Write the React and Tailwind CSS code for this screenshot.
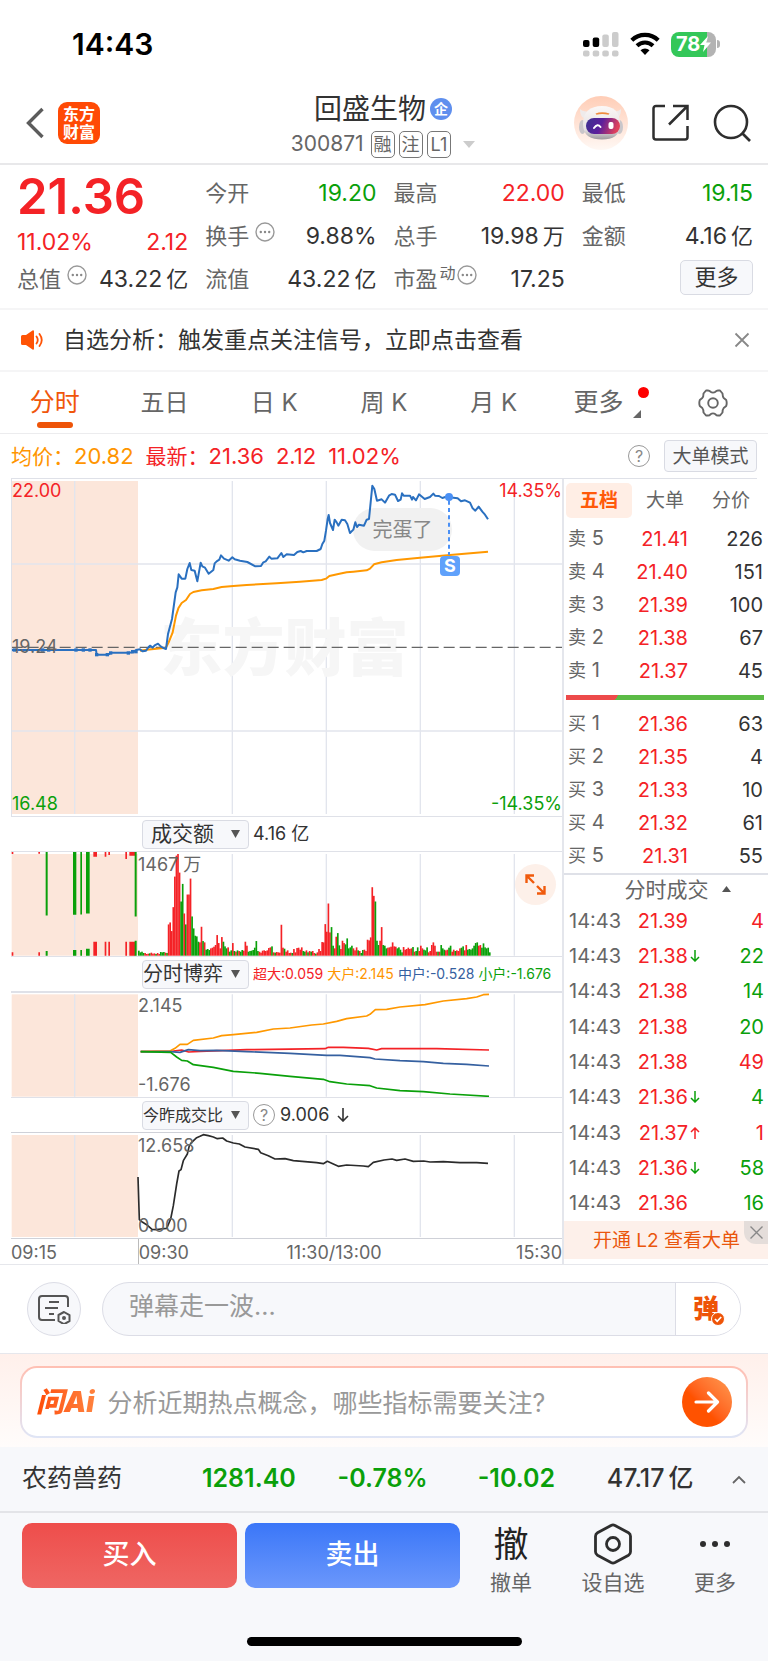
import React from "react";

const FONT = "font-['Inter','Noto_Sans_CJK_SC',sans-serif]";

const RED = "#f42226";
const GREEN = "#0aa00a";
const GRID = "#e2e5ed";
const VERTICALS = [697, 979, 1261, 1543];

const PRICE =
  "36,543 228,543 270,543 288,543 290,557 325,557 332,551 385,551 400,550 408,543 420,541 428,547 438,545 446,534 450,530 458,536 464,529 474,524 482,532 490,537 498,540 504,495 516,450 527,370 532,355 536,316 545,329 556,329 562,300 569,282 574,303 584,305 592,337 602,281 607,292 615,296 626,314 640,303 644,283 650,277 658,272 663,259 672,269 686,275 697,265 704,271 720,275 742,279 766,292 783,291 790,280 797,277 808,263 814,269 832,268 844,252 850,264 860,256 882,258 892,249 902,246 910,250 920,246 950,246 962,240 967,225 973,215 978,185 983,150 986,138 990,162 999,183 1004,152 1010,160 1015,170 1025,152 1035,154 1042,165 1050,192 1060,182 1066,160 1071,174 1077,167 1092,170 1100,152 1107,150 1117,50 1123,60 1131,95 1145,91 1155,101 1167,80 1175,75 1185,77 1194,96 1202,92 1206,73 1211,80 1230,80 1236,92 1239,84 1248,94 1257,76 1274,90 1290,84 1300,74 1305,80 1317,81 1327,87 1336,84 1347,84 1360,86 1373,88 1383,97 1395,94 1410,101 1418,118 1426,125 1436,113 1447,128 1455,137 1464,151";
const AVERAGE =
  "420,545 440,542 498,536 506,520 518,490 528,440 535,418 545,402 558,393 570,375 580,369 605,364 640,360 665,354 700,351 740,348 830,343 900,338 965,333 978,329 988,321 1005,317 1015,315 1040,310 1060,308 1100,304 1110,299 1122,286 1145,280 1190,273 1260,266 1350,258 1464,248";

const VOLUME = [
  -15, -10, -12, -8, 8, 5, 6, -7, 9, 6, 7, -5, 8, 5, -11, -10, -11, 9, -8, 94, 100, 74, 146, 238, 301, 306, 250, -163, -216, 127,
  -94, 184, 184, 232, -118, -82, -60, -58, -42, 40, 87, -44, 40, -18, -20, -17, 22, 24, 27, 32, 62, 38, 22, 56, -42, -28, -22, 25,
  -12, -16, 38, -14, 12, -16, 14, -12, -17, 15, 42, 30, -12, -14, -15, -17, -24, -44, -14, 12, 9, 15, 16, 14, 16, 23, 25, -28, 10,
  -9, 11, 10, 9, 93, 24, -21, 12, 16, 8, 9, -8, 20, 10, 23, 24, 18, 25, -14, -12, 16, -10, 14, -12, 14, 8, -6, 10, 20, 14, 41, 40,
  95, 72, 157, 70, -86, -30, 22, 57, -68, -31, 20, 45, 38, -34, -52, -22, -25, -30, 22, 16, 25, -16, 14, -8, -17, 18, 14, 48, 46,
  55, 206, 180, -163, -45, -32, 45, 86, -32, -30, -22, 24, 25, 27, 40, 28, 27, -22, -25, -18, -10, 26, 18, 20, 24, 20, 22, -26,
  12, -14, -25, 14, 30, 22, -18, -16, -25, 10, 14, 32, 40, 30, 12, -12, 12, -32, -22, -18, 16, 18, -24, -30, 12, 18, -14, 16, 14,
  22, -24, -28, 16, 32, -18, -20, -18, -22, -30, -38, -40, 30, 32, -24, -37, -25, -22, -24, -10,
];

// x, width, bottom of the upper bar, top of the lower bar, colour
const AUCTION = [
  [35, 5, 135, 431, RED],
  [115, 5, 134, 431, RED],
  [137, 6, 320, 427, GREEN],
  [219, 10, 318, 424, GREEN],
  [241, 5, 317, 424, GREEN],
  [258, 11, 314, 420, GREEN],
  [280, 11, 143, 399, RED],
  [314, 5, 143, 399, RED],
  [325, 5, 138, 399, RED],
  [376, 5, 150, 399, RED],
  [388, 17, 140, 399, RED],
  [404, 6, 323, 396, GREEN],
];

const SUPER = "422,728 520,726 545,723 566,729 600,727 740,722 975,719 985,715 1030,715 1105,718 1130,723 1145,719 1310,719 1467,723";
const LARGE =
  "422,728 510,726 525,718 540,706 562,706 580,694 640,687 665,680 700,677 770,670 820,660 870,657 935,648 970,645 1010,637 1040,629 1100,621 1110,616 1126,602 1160,601 1200,594 1275,587 1330,576 1400,569 1430,564 1450,557 1467,556";
const MEDIUM =
  "422,728 510,728 540,730 565,722 600,725 650,724 740,728 870,733 980,739 1020,739 1110,746 1125,750 1200,755 1270,758 1330,763 1400,766 1467,771";
const SMALL =
  "422,728 512,730 530,744 545,754 562,756 580,767 640,775 700,787 780,793 870,802 970,811 990,818 1040,825 1110,830 1130,837 1200,845 1270,848 1350,855 1467,862";
const RATIO =
  "414,234 418,362 428,370 440,377 456,391 470,392 482,390 500,388 512,360 520,320 530,255 537,216 543,212 550,185 562,165 568,140 575,130 590,116 600,112 610,107 625,110 640,114 652,119 668,117 680,126 700,132 718,135 735,144 775,151 782,161 805,170 825,180 855,179 880,185 950,191 970,194 982,187 1000,195 1015,202 1040,198 1090,201 1105,203 1120,190 1152,183 1176,180 1190,184 1215,180 1240,187 1271,186 1290,189 1330,188 1380,191 1430,191 1464,193";

const SELLS = [
  ["卖 5", "21.41", "226"],
  ["卖 4", "21.40", "151"],
  ["卖 3", "21.39", "100"],
  ["卖 2", "21.38", "67"],
  ["卖 1", "21.37", "45"],
];
const BUYS = [
  ["买 1", "21.36", "63"],
  ["买 2", "21.35", "4"],
  ["买 3", "21.33", "10"],
  ["买 4", "21.32", "61"],
  ["买 5", "21.31", "55"],
];
const TICKS = [
  ["21.39", "", "4", true],
  ["21.38", "↓", "22", false],
  ["21.38", "", "14", false],
  ["21.38", "", "20", false],
  ["21.38", "", "49", true],
  ["21.36", "↓", "4", false],
  ["21.37", "↑", "1", true],
  ["21.36", "↓", "58", false],
  ["21.36", "", "16", false],
];

function StatusBar() {
  return (
    <div className="flex h-[82px] items-center justify-between pr-[48px] pl-[72px] text-black">
      <span className="pt-[6px] text-[30px] font-semibold">14:43</span>
      <div className="flex items-center gap-[11px] pt-[6px]">
        <svg width="36" height="26" viewBox="0 0 36 26" aria-hidden="true">
          <rect x="0" y="9" width="6.5" height="7" rx="2" fill="#000" />
          <rect x="9.7" y="6.500" width="6.500" height="9.500" rx="2" fill="#000" />
          <rect x="19.300" y="3.500" width="6.500" height="12.500" rx="2" fill="#ccc" />
          <rect x="29" y="1" width="6.500" height="15" rx="2" fill="#ccc" />
          {[0, 9.7, 19.3, 29].map((x) => (
            <rect key={x} x={x} y="19.500" width="6.500" height="6" rx="2" fill="#ccc" />
          ))}
        </svg>
        <svg width="30" height="24" viewBox="0 0 30 24" aria-hidden="true">
          <path d="M1.800 8.200a19 19 0 0 1 26.400 0" fill="none" stroke="#000" strokeWidth="4.200" />
          <path d="M7 13.800a11.500 11.500 0 0 1 16 0" fill="none" stroke="#000" strokeWidth="4" />
          <path d="M10.500 18.200a6.500 6.500 0 0 1 9 0L15 23z" fill="#000" />
        </svg>
        <div className="flex items-center gap-px">
          <div className="flex h-[25px] w-[45px] items-center rounded-[8px] bg-[linear-gradient(90deg,#34c759_79%,#b3b3b3_79%)] pl-[5px] text-white">
            <span className="text-xl leading-6 font-bold">78</span>
            <svg width="11" height="16" viewBox="0 0 11 16" aria-hidden="true">
              <path d="M8 0 0 9h4.500L3 16l8-9.500H6.500z" fill="#fff" />
            </svg>
          </div>
          <span className="h-2 w-[3px] rounded-r-full bg-[#b3b3b3]" />
        </div>
      </div>
    </div>
  );
}

function Robot() {
  return (
    <svg width="54" height="54" viewBox="0 0 54 54" aria-hidden="true">
      <defs>
        <linearGradient id="halo" x1="0" y1="0" x2="0" y2="1">
          <stop offset="0" stopColor="#ffcdb6" />
          <stop offset="1" stopColor="#fff8f4" />
        </linearGradient>
        <linearGradient id="visor" x1="0" y1="0" x2="1" y2="0.200">
          <stop offset="0" stopColor="#3b3190" />
          <stop offset="0.500" stopColor="#5b1f9c" />
          <stop offset="1" stopColor="#e0405c" />
        </linearGradient>
        <linearGradient id="helmet" x1="0" y1="0" x2="0" y2="1">
          <stop offset="0" stopColor="#fbf8f7" />
          <stop offset="0.700" stopColor="#e6e2e3" />
          <stop offset="1" stopColor="#9d9a9e" />
        </linearGradient>
      </defs>
      <circle cx="27" cy="27" r="27" fill="url(#halo)" />
      <path d="M6 13c0 6 2 9 6 10l5-8c-6 1-9 0-11-2zM47 13c0 6-2 9-6 10l-4-8c5 1 8 0 10-2z" fill="#efebeb" />
      <ellipse cx="8.500" cy="31" rx="3.500" ry="7" fill="#c9c6ca" />
      <ellipse cx="45.500" cy="31" rx="3.500" ry="7" fill="#c9c6ca" />
      <path d="M9 28C9 16 16 10 28 10s18 6 18 18-7 15.500-18 15.500S9 40 9 28z" fill="url(#helmet)" />
      <path d="M21.500 17.500q6.500-2.500 14 0l-1 1.200q-6.500-1.200-12 0z" fill="#ef8b3e" />
      <rect x="12" y="22" width="34" height="16" rx="8" fill="url(#visor)" />
      <path d="M20 32q3.500-5 6.500-1" fill="none" stroke="#fff" strokeWidth="2" strokeLinecap="round" />
      <rect x="34.500" y="26" width="5" height="7" rx="2" fill="#fff" />
    </svg>
  );
}

function Header() {
  return (
    <header className="grid h-[83px] grid-cols-[1fr_auto_1fr] items-center border-b-2 border-[#e8e8ea] pr-[17px] pl-[15px]">
      <div className="flex items-center gap-[13px] pl-[10px]">
        <button type="button" aria-label="返回">
          <svg width="20" height="32" viewBox="0 0 20 32" className="block" aria-hidden="true">
            <path d="M17.500 2 3.500 16l14 14" fill="none" stroke="#5c5c5c" strokeWidth="3.400" />
          </svg>
        </button>
        <a href="#home" className="grid size-[42px] place-content-center rounded-[9px] bg-[#ff4a05] text-center text-base leading-[18px] font-bold text-white">
          <span>东方</span>
          <span>财富</span>
        </a>
      </div>
      <div className="flex flex-col items-center gap-[3px] pt-1">
        <h1 className="flex items-center gap-1 text-[28px] leading-9 text-[#333]">
          回盛生物
          <span className="grid size-[22px] place-content-center rounded-full bg-[#5f8fee] text-sm leading-none font-bold text-white">企</span>
        </h1>
        <div className="flex items-center gap-1 text-[21px] leading-7 text-[#666]">
          <span className="mr-[3px]">300871</span>
          <span className="rounded-[5px] border border-[#777] px-[2px] text-lg leading-[25px]">融</span>
          <span className="rounded-[5px] border border-[#777] px-[2px] text-lg leading-[25px]">注</span>
          <span className="rounded-[5px] border border-[#777] px-[3px] text-lg leading-[25px]">L1</span>
          <svg width="12" height="7" viewBox="0 0 12 7" className="ml-2" aria-hidden="true">
            <path d="M0 0h12L6 7z" fill="#ccc" />
          </svg>
        </div>
      </div>
      <div className="flex items-center justify-end gap-6">
        <button type="button" aria-label="智能助手">
          <Robot />
        </button>
        <button type="button" aria-label="分享">
          <svg width="37" height="37" viewBox="0 0 37 37" fill="none" stroke="#2e2e2e" strokeWidth="2.500" aria-hidden="true">
            <path d="M13 2H4a2.500 2.500 0 0 0-2.500 2.500V33A2.500 2.500 0 0 0 4 35.500h29a2.500 2.500 0 0 0 2.500-2.500V22M21 2h14.500v14M35 2.500 17 20.500" />
          </svg>
        </button>
        <button type="button" aria-label="搜索">
          <svg width="38" height="38" viewBox="0 0 38 38" fill="none" stroke="#2e2e2e" strokeWidth="2.600" aria-hidden="true">
            <circle cx="18" cy="18" r="16" />
            <path d="M29 29l8 8" />
          </svg>
        </button>
      </div>
    </header>
  );
}

function Dots({ tight }) {
  return (
    <svg width="20" height="20" viewBox="0 0 20 20" className={`mb-2 inline-block shrink-0 ${tight ? "ml-px" : "ml-[6px]"}`} aria-hidden="true">
      <circle cx="10" cy="10" r="9" fill="none" stroke="#999" strokeWidth="1.400" />
      <circle cx="5.800" cy="10" r="1.200" fill="#888" />
      <circle cx="10" cy="10" r="1.200" fill="#888" />
      <circle cx="14.200" cy="10" r="1.200" fill="#888" />
    </svg>
  );
}

function Stat({ label, info, sup, value, unit, tone = "text-[#333]" }) {
  return (
    <div className="flex h-[43px] items-center justify-between">
      <dt className="flex items-center text-[#666]">
        {label}
        {sup && <sup className="top-0 mb-3 ml-[2px] text-base">{sup}</sup>}
        {info && <Dots tight={Boolean(sup)} />}
      </dt>
      <dd className={`text-[23px] ${tone}`}>
        {value}
        {unit && <span className="ml-1 text-[22px]">{unit}</span>}
      </dd>
    </div>
  );
}

function Quote() {
  return (
    <section className="grid h-[145px] grid-cols-4 gap-x-[17px] border-b-2 border-[#f5f5f6] pt-[6px] pr-[15px] pl-[17px] text-[22px] leading-7">
      <div>
        <div className="h-[56px] text-[49px] leading-[52px] font-semibold text-[#f42226]">21.36</div>
        <div className="flex h-[30px] items-center justify-between text-[23px] text-[#f42226]">
          <span>11.02%</span>
          <span>2.12</span>
        </div>
        <dl>
          <Stat label="总值" info value="43.22" unit="亿" />
        </dl>
      </div>
      <dl>
        <Stat label="今开" value="19.20" tone="text-[#0aa00a]" />
        <Stat label="换手" info value="9.88%" />
        <Stat label="流值" value="43.22" unit="亿" />
      </dl>
      <dl>
        <Stat label="最高" value="22.00" tone="text-[#f42226]" />
        <Stat label="总手" value="19.98" unit="万" />
        <Stat label="市盈" sup="动" info value="17.25" />
      </dl>
      <div>
        <dl>
          <Stat label="最低" value="19.15" tone="text-[#0aa00a]" />
          <Stat label="金额" value="4.16" unit="亿" />
        </dl>
        <div className="flex h-[40px] items-center justify-end">
          <button type="button" className="h-[35px] w-[73px] rounded-[5px] border border-[#d9dbe3] bg-[#f7f8fb] text-[#333]">
            更多
          </button>
        </div>
      </div>
    </section>
  );
}

function Notice() {
  return (
    <div className="flex h-[62px] items-center border-b-2 border-[#f5f5f6] pr-[18px] pl-5 text-[#333]">
      <svg width="24" height="20" viewBox="0 0 24 20" aria-hidden="true">
        <path d="M1 6.500Q1 5 2.500 5H6l6.500-4.600Q14 0 14 1.500v17q0 1.500-1.500 1.100L6 15H2.500Q1 15 1 13.500z" fill="#ff5305" />
        <path d="M16.500 6.500q2.500 3.500 0 7M19.500 4q4.500 6 0 12" fill="none" stroke="#ff5305" strokeWidth="1.800" strokeLinecap="round" />
      </svg>
      <a href="#signal" className="ml-[19px] flex-1 text-[23px]">
        自选分析：触发重点关注信号，立即点击查看
      </a>
      <button type="button" aria-label="关闭">
        <svg width="16" height="16" viewBox="0 0 16 16" aria-hidden="true">
          <path d="M1.500 1.500l13 13M14.500 1.500l-13 13" stroke="#888" strokeWidth="1.800" />
        </svg>
      </button>
    </div>
  );
}

function PeriodTabs() {
  return (
    <nav className="grid h-[62px] grid-cols-7 border-b border-[#ececee] text-2xl text-[#666]">
      <button type="button" className="relative text-[25px] text-[#f0560a]">
        分时
        <span className="absolute bottom-[5px] left-1/2 h-[6px] w-9 -translate-x-1/2 rounded-full bg-[#ee5408]" />
      </button>
      <button type="button">五日</button>
      <button type="button">日 K</button>
      <button type="button">周 K</button>
      <button type="button">月 K</button>
      <button type="button" className="flex items-center justify-center gap-[10px] pl-2 text-[25px]">
        更多
        <span className="flex flex-col items-end gap-3">
          <span className="-mr-2 size-[11px] rounded-full bg-[#fe0000]" />
          <svg width="8" height="8" viewBox="0 0 8 8" aria-hidden="true">
            <path d="M8 0v8H0z" fill="#666" />
          </svg>
        </span>
      </button>
      <button type="button" aria-label="设置" className="grid place-content-center">
        <svg width="30" height="28" viewBox="0 0 30 28" fill="none" stroke="#666" strokeWidth="1.900" strokeLinejoin="round" aria-hidden="true">
          <path d="M8 1.500h2q1.500 0 2.500 1.200 2.500 1.800 5 0Q18.500 1.500 20 1.500h2l2.500 3q.2 3.500 1.200 4.500l2.500 2q1 3 0 6l-2.500 2q-1.200 1.500-1.200 4.500l-2.500 3h-2q-1.500 0-2.500-1.200-2.500-1.800-5 0-1 1.200-2.500 1.200H8l-2.500-3q0-3-1.200-4.500L1.800 17q-1-3 0-6l2.500-2Q5.500 8 5.500 4.500z" />
          <circle cx="15" cy="14" r="4.800" />
        </svg>
      </button>
    </nav>
  );
}

function Help() {
  return (
    <button type="button" aria-label="说明" className="grid size-[22px] shrink-0 place-content-center rounded-full border-[1.5px] border-[#999] text-base leading-none text-[#888]">
      ?
    </button>
  );
}

function PriceLegend() {
  return (
    <div className="mr-[11px] ml-[11px] flex h-[45px] items-center border-b border-[#dfe1e8] text-[22px]">
      <span className="text-[#ff9500]">
        <span className="text-[21px]">均价：</span>20.82
      </span>
      <span className="ml-3 text-[#f42226]">
        <span className="text-[21px]">最新：</span>21.36
      </span>
      <span className="ml-3 text-[#f42226]">2.12</span>
      <span className="mr-auto ml-3 text-[#f42226]">11.02%</span>
      <Help />
      <button type="button" className="ml-[14px] h-8 w-[93px] rounded-[4px] border border-[#d9dbe3] bg-[#f7f8fb] text-[19px] leading-none text-[#555]">
        大单模式
      </button>
    </div>
  );
}

function Grid({ top, bottom }) {
  return (
    <>
      <rect x="35" y={top} width="379" height={bottom - top} fill="#fce6da" />
      <path d={`M224 ${top}V${bottom}`} stroke={GRID} strokeWidth="4" />
      {VERTICALS.map((x) => (
        <path key={x} d={`M${x} ${top}V${bottom}`} stroke={GRID} strokeWidth="4" />
      ))}
    </>
  );
}

function Line({ points, color, width = 5 }) {
  return <polyline points={points} fill="none" stroke={color} strokeWidth={width} strokeLinejoin="round" />;
}

function PriceChart() {
  return (
    <div className="relative h-[338px] border-b border-l border-[#dfe1e8] text-lg leading-5">
      <svg viewBox="36 30 1650 1011" preserveAspectRatio="none" className="absolute inset-0 size-full" aria-hidden="true">
        <Grid top={36} bottom={1035} />
        <path d="M35 285H1686M35 786H1686" stroke={GRID} strokeWidth="5" />
      </svg>
      <span className="absolute top-[132px] left-[27%] text-[62px] leading-[76px] font-black text-[#f6f6f6]">东方财富</span>
      <span className="absolute top-[29px] left-[62%] flex h-[43px] w-[99px] items-center justify-center rounded-full bg-[#f1f1f1] text-xl text-[#888]">完蛋了</span>
      <svg viewBox="36 30 1650 1011" preserveAspectRatio="none" className="absolute inset-0 size-full" role="img" aria-label="分时走势">
        <path d="M35 535H1686" stroke="#666" strokeWidth="4" strokeDasharray="33 15" />
        <Line points={AVERAGE} color="#ff9800" width={6} />
        <Line points={PRICE} color="#2a70c0" width={6} />
        {[43, 128, 146, 228, 250, 270, 290, 322, 332, 385, 398, 408].map((x) => (
          <rect key={x} x={x - 5} y={x < 280 ? 538 : x < 330 ? 552 : x < 390 ? 547 : 543} width="10" height="10" fill="#2a70c0" />
        ))}
        <path d="M1347 95V258" stroke="#4a90f5" strokeWidth="6" strokeDasharray="12 10" />
        <circle cx="1347" cy="84" r="12" fill="#4a90f5" />
      </svg>
      <span className="absolute top-[77px] left-[78%] grid size-5 -translate-x-px place-content-center rounded-[4px] bg-[#5fa1fb] text-lg leading-none font-bold text-white">S</span>
      <span className="absolute top-[2px] left-0 text-[#f42226]">22.00</span>
      <span className="absolute top-[2px] right-0 text-[#f42226]">14.35%</span>
      <span className="absolute top-[158px] left-0 text-[#666]">19.24</span>
      <span className="absolute bottom-[2px] left-0 text-[#0aa00a]">16.48</span>
      <span className="absolute right-0 bottom-[2px] text-[#0aa00a]">-14.35%</span>
    </div>
  );
}

function Picker({ label, name, size }) {
  return (
    <div className="relative ml-[131px] shrink-0">
      <select aria-label={name} className={`block h-[29px] w-[107px] appearance-none rounded-[4px] border border-[#d9dbe3] bg-[#f7f8fb] leading-[26px] text-[#333] ${size}`}>
        <option>{label}</option>
      </select>
      <svg width="9" height="8" viewBox="0 0 9 8" className="pointer-events-none absolute top-[10px] right-[9px]" aria-hidden="true">
        <path d="M0 0h9L4.500 8z" fill="#555" />
      </svg>
    </div>
  );
}

function VolumeChart() {
  return (
    <div className="relative h-[106px] border-y border-[#dfe1e8] text-lg leading-5">
      <svg viewBox="33 129 1653 313" preserveAspectRatio="none" className="absolute inset-0 size-full" role="img" aria-label="成交额">
        <Grid top={135} bottom={441} />
        {AUCTION.map(([x, w, upper, lower, color]) => (
          <path key={x} d={`M${x} 129h${w}V${upper}h-${w}zM${x} ${lower}h${w}V441h-${w}z`} fill={color} />
        ))}
        {VOLUME.map((v, i) => (
          <rect key={i} x={414 + i * 4.7} y={441 - Math.abs(v)} width="5" height={Math.abs(v)} fill={v > 0 ? RED : GREEN} />
        ))}
      </svg>
      <span className="absolute top-[3px] left-[127px] text-[#666]">1467 万</span>
      <button type="button" aria-label="全屏" className="absolute top-[12px] right-[6px] grid size-[41px] place-content-center rounded-full bg-[#fdf0e9]">
        <svg width="21" height="21" viewBox="0 0 21 21" fill="none" stroke="#f05a0c" strokeWidth="2.400" aria-hidden="true">
          <path d="M9 1.500H1.500V9M1.500 1.500l7.500 7.500M12 19.500h7.500V12M19.500 19.500 12 12" />
        </svg>
      </button>
    </div>
  );
}

function Charts() {
  return (
    <div className="flex min-w-0 flex-1 flex-col pl-[11px]">
      <PriceChart />
      <div className="flex h-[34px] items-center">
        <Picker name="指标一" label="成交额" size="pl-2 text-[21px]" />
        <span className="ml-1 text-lg text-[#333]">4.16 亿</span>
      </div>
      <VolumeChart />
      <div className="flex h-[34px] items-center">
        <Picker name="指标二" label="分时博弈" size="text-xl" />
        <div className="ml-1 flex gap-1 text-sm whitespace-nowrap">
          <span className="text-[#f42226]">超大:0.059</span>
          <span className="text-[#ff9500]">大户:2.145</span>
          <span className="text-[#3560a0]">中户:-0.528</span>
          <span className="text-[#0aa00a]">小户:-1.676</span>
        </div>
      </div>
      <div className="relative h-[107px] border-t-2 border-b border-[#dfe1e8] text-lg leading-5 text-[#666]">
        <svg viewBox="33 552 1653 312" preserveAspectRatio="none" className="absolute inset-0 size-full" role="img" aria-label="分时博弈">
          <Grid top={556} bottom={863} />
          <Line points={SUPER} color="#f42226" />
          <Line points={LARGE} color="#ff9800" />
          <Line points={MEDIUM} color="#3560a0" />
          <Line points={SMALL} color="#0aa00a" />
        </svg>
        <span className="absolute top-[3px] left-[127px]">2.145</span>
        <span className="absolute bottom-[2px] left-[127px]">-1.676</span>
      </div>
      <div className="flex h-[34px] items-center">
        <Picker name="指标三" label="今昨成交比" size="text-base" />
        <span className="ml-1 flex">
          <Help />
        </span>
        <span className="ml-[5px] text-lg text-[#333]">9.006</span>
        <svg width="12" height="14" viewBox="0 0 12 14" className="ml-2" fill="none" stroke="#333" strokeWidth="1.600" aria-hidden="true">
          <path d="M6 0v12.500M1 8l5 5 5-5" />
        </svg>
      </div>
      <div className="relative h-[107px] border-y border-[#cfd1d8] text-lg leading-5 text-[#666]">
        <svg viewBox="33 102 1653 315" preserveAspectRatio="none" className="absolute inset-0 size-full" role="img" aria-label="今昨成交比">
          <Grid top={108} bottom={414} />
          <Line points={RATIO} color="#2b2b2b" />
        </svg>
        <span className="absolute top-[3px] left-[127px]">12.658</span>
        <span className="absolute bottom-[2px] left-[127px]">0.000</span>
      </div>
      <div className="flex h-[25px] items-stretch text-lg leading-[27px] text-[#666]">
        <span className="w-[23%]">09:15</span>
        <span className="w-[27%] border-l border-[#bbb]">09:30</span>
        <span>11:30/13:00</span>
        <span className="ml-auto">15:30</span>
      </div>
    </div>
  );
}

function Book({ rows, caption }) {
  return (
    <table className="h-[166px] w-full text-xl leading-6" aria-label={caption}>
      <tbody>
        {rows.map(([label, price, count]) => (
          <tr key={label}>
            <td className="w-[52px] pl-1 whitespace-nowrap text-[#666]">
              <span className="text-lg">{label.slice(0, 1)}</span>
              {" " + label.slice(2)}
            </td>
            <td className="w-[72px] text-right text-[#f42226]">{price}</td>
            <td className="pr-[5px] text-right text-[#333]">{count}</td>
          </tr>
        ))}
      </tbody>
    </table>
  );
}

function SidePanel() {
  return (
    <aside className="flex w-[206px] shrink-0 flex-col border-l-2 border-[#e4e6ec]">
      <div className="flex h-[43px] items-center text-[19px] leading-none text-[#666]">
        <button type="button" className="ml-[2px] h-[35px] w-[66px] rounded-[5px] bg-[#ffeee5] font-bold text-[#ff5a0a]">
          五档
        </button>
        <button type="button" className="flex-1">
          大单
        </button>
        <button type="button" className="mr-1 flex-1">
          分价
        </button>
      </div>
      <Book rows={SELLS} caption="卖盘" />
      <div className="flex h-[19px] items-center pr-1 pl-[2px]">
        <div className="h-[5px] w-full bg-[linear-gradient(125deg,#ed4a4a_26%,#5bbb46_26%)]" />
      </div>
      <Book rows={BUYS} caption="买盘" />
      <button type="button" className="flex h-[30px] items-center justify-center gap-[13px] border-t-2 border-[#dfe1e8] pl-[23px] text-[21px] leading-none text-[#666]">
        分时成交
        <svg width="9" height="6" viewBox="0 0 9 6" aria-hidden="true">
          <path d="M4.500 0 9 6H0z" fill="#555" />
        </svg>
      </button>
      <table className="h-[318px] w-full text-xl leading-6" aria-label="分时成交">
        <tbody>
          {TICKS.map(([price, arrow, count, up], i) => (
            <tr key={i}>
              <td className="w-[60px] pl-[5px] text-[#666]">14:43</td>
              <td className="w-[64px] text-right text-[#f42226]">{price}</td>
              <td className={up ? "text-[#f42226]" : "text-[#0aa00a]"}>
                {arrow && (
                  <svg width="10" height="12" viewBox="0 0 10 12" className="ml-[2px] block" fill="none" stroke="currentColor" strokeWidth="1.500" aria-label={arrow}>
                    <path d={arrow === "↓" ? "M5 0v11M1 7l4 4 4-4" : "M5 12V1M1 5l4-4 4 4"} />
                  </svg>
                )}
              </td>
              <td className={`pr-1 text-right ${up ? "text-[#f42226]" : "text-[#0aa00a]"}`}>{count}</td>
            </tr>
          ))}
        </tbody>
      </table>
      <div className="relative flex h-[38px] items-center bg-[#fdf0ea]">
        <a href="#level2" className="pl-[29px] text-[19px] leading-none text-[#ea560c]">
          开通 L2 查看大单
        </a>
        <button type="button" aria-label="关闭" className="absolute top-0 right-0 grid h-[23px] w-6 place-content-center rounded-bl-[12px] bg-[#e4ddda]">
          <svg width="13" height="13" viewBox="0 0 13 13" aria-hidden="true">
            <path d="M.5.5l12 12M12.500.5l-12 12" stroke="#888" strokeWidth="1.400" />
          </svg>
        </button>
      </div>
    </aside>
  );
}

function Barrage() {
  return (
    <div className="flex h-[90px] items-center gap-[21px] border-t border-b border-[#e6e7ec] pr-[27px] pl-[27px]">
      <button type="button" aria-label="弹幕设置" className="grid size-[54px] shrink-0 place-content-center rounded-full border border-[#dcdde6] bg-[#f7f8fb]">
        <svg width="34" height="30" viewBox="0 0 34 30" fill="none" stroke="#555" strokeWidth="2" aria-hidden="true">
          <path d="M31 13V5a3 3 0 0 0-3-3H5a3 3 0 0 0-3 3v18a3 3 0 0 0 3 3h13M12 8h10M8 14h13M12 20h5" />
          <path d="M27 18l5.500 3.200v6L27 30.200 21.500 27v-6z" strokeLinejoin="round" />
          <circle cx="27" cy="24" r="1" fill="#555" />
        </svg>
      </button>
      <div className="flex h-[54px] min-w-0 flex-1 overflow-hidden rounded-full border border-[#dcdde6] bg-[#f7f8fb]">
        <input aria-label="弹幕" placeholder="弹幕走一波..." className="min-w-0 flex-1 bg-transparent pb-1 pl-[26px] text-[25px] text-[#333] outline-none placeholder:text-[#999]" />
        <button type="button" aria-label="弹幕开关" className="relative w-[65px] border-l border-[#dcdde6] bg-white pr-1 text-[26px] leading-none font-black text-[#ee5408]">
          弹
          <svg width="14" height="14" viewBox="0 0 14 14" className="absolute top-[29px] left-[35px]" aria-hidden="true">
            <circle cx="7" cy="7" r="6.500" fill="#ee5408" stroke="#fff" />
            <path d="M4 7l2.200 2.300L10.200 5" fill="none" stroke="#fff" strokeWidth="1.700" />
          </svg>
        </button>
      </div>
    </div>
  );
}

function AskAi() {
  return (
    <div className="bg-linear-to-b from-[#fff0eb] to-[#fffcfb] px-5 pt-3 pb-[9px]">
      <div className="rounded-[17px] bg-linear-to-b from-[#ffbfb2] to-[#dfe5f6] p-[2px]">
        <div className="flex h-[68px] items-center rounded-[15px] bg-white pr-[14px] pl-[14px]">
          <span className="bg-linear-to-r from-[#ff4b00] to-[#ff8540] bg-clip-text pr-1 text-[28px] leading-9 font-black text-transparent italic">问Ai</span>
          <input aria-label="问Ai" placeholder="分析近期热点概念，哪些指标需要关注?" className="ml-[9px] min-w-0 flex-1 bg-transparent pt-1 text-[25px] text-[#333] outline-none placeholder:text-[#999]" />
          <button type="button" aria-label="发送" className="grid size-[50px] shrink-0 place-content-center rounded-full bg-linear-to-tr from-[#ff5200] from-40% to-[#ff9a50]">
            <svg width="26" height="22" viewBox="0 0 26 22" fill="none" stroke="#fff" strokeWidth="3.200" strokeLinecap="round" strokeLinejoin="round" aria-hidden="true">
              <path d="M2 11h21M14.500 2l9 9-9 9" />
            </svg>
          </button>
        </div>
      </div>
    </div>
  );
}

function SectorRow() {
  return (
    <a href="#sector" className="flex h-[66px] items-center border-b-2 border-[#e3e4e8] bg-[#f7f8fb] pr-[7px] pl-[22px] text-[25px] text-[#333]">
      <span className="w-[160px]">农药兽药</span>
      <span className="flex-1 text-center font-semibold text-[#0aa00a]">1281.40</span>
      <span className="flex-1 text-center font-semibold text-[#0aa00a]">-0.78%</span>
      <span className="flex-1 text-center font-semibold text-[#0aa00a]">-10.02</span>
      <span className="flex-1 text-center font-medium">
        47.17<span className="ml-1">亿</span>
      </span>
      <span className="grid w-11 place-content-center">
        <svg width="14" height="9" viewBox="0 0 14 9" aria-hidden="true">
          <path d="M1 8l6-6 6 6" fill="none" stroke="#666" strokeWidth="1.800" />
        </svg>
      </span>
    </a>
  );
}

function BottomBar() {
  return (
    <footer className="bg-[#f7f8fb] pt-[10px]">
      <div className="flex items-start">
        <div className="flex flex-1 gap-2 pl-[22px] text-[27px] font-medium text-white">
          <button type="button" className="h-[65px] flex-1 rounded-[10px] bg-linear-to-b from-[#ee4d4b] to-[#ef6663]">
            买入
          </button>
          <button type="button" className="h-[65px] flex-1 rounded-[10px] bg-linear-to-b from-[#3a76f8] to-[#6b97fb]">
            卖出
          </button>
        </div>
        <div className="flex pr-[2px] text-[21px] leading-7 text-[#666]">
          <button type="button" className="flex w-[102px] flex-col items-center gap-1">
            <span className="text-[35px] leading-[42px] text-[#222]">撤</span>
            <span>撤单</span>
          </button>
          <button type="button" className="flex w-[102px] flex-col items-center gap-1">
            <svg width="40" height="42" viewBox="0 0 40 42" fill="none" stroke="#2e2e2e" strokeWidth="2.800" aria-hidden="true">
              <path d="M18 2.400q2-1 4 0l13.500 7.400q2 1.200 2 3.500v15.400q0 2.300-2 3.500L22 39.600q-2 1-4 0L4.500 32.200q-2-1.200-2-3.500V13.300q0-2.300 2-3.500z" />
              <circle cx="20" cy="21" r="6.500" />
            </svg>
            <span>设自选</span>
          </button>
          <button type="button" className="flex w-[102px] flex-col items-center gap-1">
            <svg width="32" height="42" viewBox="0 0 32 42" fill="#2e2e2e" aria-hidden="true">
              <circle cx="4" cy="21" r="3" />
              <circle cx="16" cy="21" r="3" />
              <circle cx="28" cy="21" r="3" />
            </svg>
            <span>更多</span>
          </button>
        </div>
      </div>
      <div className="flex h-[64px] items-end justify-center pb-[15px]">
        <div className="h-[9px] w-[275px] rounded-full bg-black" />
      </div>
    </footer>
  );
}

export default function App() {
  return (
    <div className={`min-h-screen bg-white ${FONT}`}>
      <StatusBar />
      <Header />
      <Quote />
      <Notice />
      <PeriodTabs />
      <PriceLegend />
      <main className="flex">
        <Charts />
        <SidePanel />
      </main>
      <Barrage />
      <AskAi />
      <SectorRow />
      <BottomBar />
    </div>
  );
}
